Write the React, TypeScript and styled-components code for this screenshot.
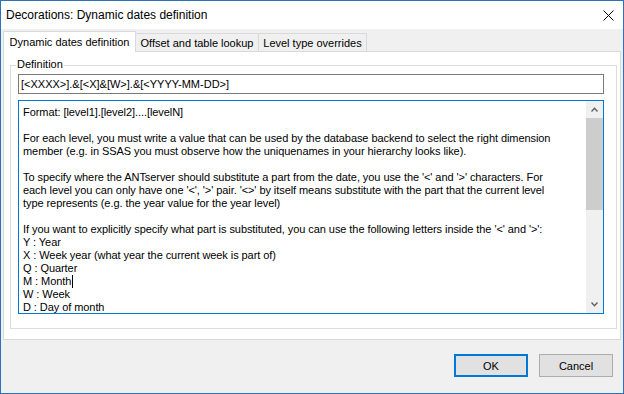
import React from "react";
import styled, { createGlobalStyle } from "styled-components";

const GlobalStyle = createGlobalStyle`
  html, body { margin: 0; padding: 0; background: #ffffff; }
  body {
    font-family: "Liberation Sans", Arial, sans-serif;
    font-size: 11px;
    color: #000000;
  }
  * { box-sizing: border-box; }
`;

const Window = styled.div`
  width: 624px;
  height: 394px;
  border: 1px solid #2a73b8;
  background: #f0f0f0;
  display: flex;
  flex-direction: column;
`;

const TitleBar = styled.div`
  height: 28px;
  background: #ffffff;
  display: flex;
  align-items: center;
  justify-content: space-between;
  padding: 0 9px 0 5px;
`;

const Title = styled.span`
  font-size: 12px;
  line-height: 14px;
`;

const CloseButton = styled.span`
  display: flex;
  width: 11px;
  height: 11px;
`;

const Body = styled.div`
  padding: 2px 2px 0 2px;
  display: flex;
  flex-direction: column;
`;

const TabRow = styled.div`
  display: flex;
  align-items: flex-end;
  height: 20px;
`;

const Tab = styled.div<{ $active?: boolean; $w: number }>`
  width: ${(p) => p.$w}px;
  height: ${(p) => (p.$active ? 21 : 18)}px;
  margin-bottom: ${(p) => (p.$active ? -1 : 0)}px;
  margin-left: ${(p) => (p.$active ? 0 : -1)}px;
  border: 1px solid #d9d9d9;
  border-bottom: none;
  background: ${(p) => (p.$active ? "#ffffff" : "#f0f0f0")};
  position: relative;
  z-index: ${(p) => (p.$active ? 2 : 1)};
  display: flex;
  align-items: center;
  justify-content: center;
  padding-bottom: ${(p) => (p.$active ? 1 : 0)}px;
  white-space: nowrap;
  font-size: 11px;
`;

const Panel = styled.div`
  border: 1px solid #d9d9d9;
  background: #ffffff;
  padding: 13px 3px 10px 6px;
`;

const Group = styled.div`
  position: relative;
  border: 1px solid #dcdcdc;
  padding: 8px 12px 14px 7px;
  display: flex;
  flex-direction: column;
  gap: 6px;
`;

const GroupLabel = styled.span`
  position: absolute;
  top: -8px;
  left: 5px;
  padding: 0 1px;
  background: #ffffff;
  line-height: 13px;
`;

const TextInput = styled.div`
  height: 20px;
  border: 1px solid #7a7a7a;
  padding: 0 2px;
  display: flex;
  align-items: center;
  line-height: 18px;
  white-space: pre;
`;

const Memo = styled.div`
  height: 214px;
  border: 1px solid #0078d7;
  display: flex;
`;

const MemoText = styled.div`
  flex: 1;
  padding: 5px 0 0 4px;
  overflow: hidden;
  letter-spacing: -0.07px;
`;

const Line = styled.div`
  height: 13px;
  line-height: 13px;
  white-space: pre;
`;

const Caret = styled.span`
  display: inline-block;
  width: 1px;
  height: 13px;
  margin-left: 1px;
  background: #000000;
  vertical-align: top;
`;

const ScrollBar = styled.div`
  width: 17px;
  background: #f0f0f0;
  display: flex;
  flex-direction: column;
`;

const ScrollArrow = styled.div`
  height: 17px;
  display: flex;
  align-items: center;
  justify-content: center;
`;

const ScrollTrack = styled.div`
  flex: 1;
  display: flex;
  flex-direction: column;
`;

const ScrollThumb = styled.div`
  height: 92px;
  background: #cdcdcd;
`;

const Footer = styled.div`
  display: flex;
  justify-content: flex-end;
  gap: 11px;
  padding: 14px 8px 0 0;
`;

const Button = styled.button<{ $primary?: boolean }>`
  width: 74px;
  height: 23px;
  background: #e1e1e1;
  border: ${(p) => (p.$primary ? "2px solid #0078d7" : "1px solid #adadad")};
  font-family: "Liberation Sans", Arial, sans-serif;
  font-size: 11px;
  color: #000000;
  padding: 0;
  margin: 0;
  display: flex;
  align-items: center;
  justify-content: center;
`;

const Chevron = ({ up }: { up?: boolean }) => (
  <svg width="7" height="5" viewBox="0 0 7 5">
    <path
      d={up ? "M0.5 4.5 L3.5 1.2 L6.5 4.5" : "M0.5 0.5 L3.5 3.8 L6.5 0.5"}
      fill="none"
      stroke="#606060"
      strokeWidth="1.4"
    />
  </svg>
);

const lines: string[] = [
  "Format: [level1].[level2]....[levelN]",
  "",
  "For each level, you must write a value that can be used by the database backend to select the right dimension",
  "member (e.g. in SSAS you must observe how the uniquenames in your hierarchy looks like).",
  "",
  "To specify where the ANTserver should substitute a part from the date, you use the '<' and '>' characters. For",
  "each level you can only have one '<', '>' pair. '<>' by itself means substitute with the part that the current level",
  "type represents (e.g. the year value for the year level)",
  "",
  "If you want to explicitly specify what part is substituted, you can use the following letters inside the '<' and '>':",
  "Y : Year",
  "X : Week year (what year the current week is part of)",
  "Q : Quarter",
  "M : Month",
  "W : Week",
  "D : Day of month",
];

export default function App() {
  return (
    <>
      <GlobalStyle />
      <Window>
        <TitleBar>
          <Title>Decorations: Dynamic dates definition</Title>
          <CloseButton>
            <svg width="11" height="11" viewBox="0 0 11 11">
              <path d="M0.5 0.5 L10.5 10.5 M10.5 0.5 L0.5 10.5" stroke="#000" strokeWidth="1" />
            </svg>
          </CloseButton>
        </TitleBar>
        <Body>
          <TabRow>
            <Tab $active $w={133}>Dynamic dates definition</Tab>
            <Tab $w={124}>Offset and table lookup</Tab>
            <Tab $w={109}>Level type overrides</Tab>
          </TabRow>
          <Panel>
            <Group>
              <GroupLabel>Definition</GroupLabel>
              <TextInput>[&lt;XXXX&gt;].&amp;[&lt;X]&amp;[W&gt;].&amp;[&lt;YYYY-MM-DD&gt;]</TextInput>
              <Memo>
                <MemoText>
                  {lines.map((l, i) => (
                    <Line key={i}>
                      {l}
                      {l === "M : Month" && <Caret />}
                    </Line>
                  ))}
                </MemoText>
                <ScrollBar>
                  <ScrollArrow>
                    <Chevron up />
                  </ScrollArrow>
                  <ScrollTrack>
                    <ScrollThumb />
                  </ScrollTrack>
                  <ScrollArrow>
                    <Chevron />
                  </ScrollArrow>
                </ScrollBar>
              </Memo>
            </Group>
          </Panel>
          <Footer>
            <Button $primary>OK</Button>
            <Button>Cancel</Button>
          </Footer>
        </Body>
      </Window>
    </>
  );
}
